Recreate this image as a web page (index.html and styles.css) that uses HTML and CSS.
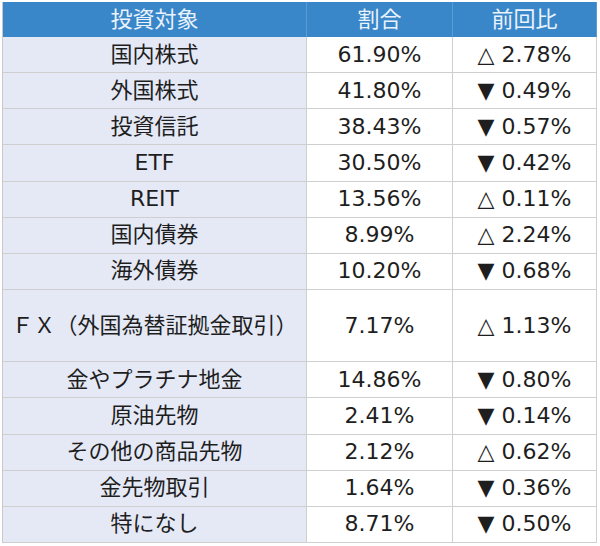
FILE: index.html
```html
<!DOCTYPE html>
<html lang="ja">
<head>
<meta charset="utf-8">
<link rel="stylesheet" href="styles.css">
</head>
<body>
<div class="tbl">
  <div class="c h">投資対象</div><div class="c h">割合</div><div class="c h">前回比</div>
  <div class="c n">国内株式</div><div class="c">61.90%</div><div class="c">△ 2.78%</div>
  <div class="c n">外国株式</div><div class="c">41.80%</div><div class="c">▼ 0.49%</div>
  <div class="c n">投資信託</div><div class="c">38.43%</div><div class="c">▼ 0.57%</div>
  <div class="c n">ETF</div><div class="c">30.50%</div><div class="c">▼ 0.42%</div>
  <div class="c n">REIT</div><div class="c">13.56%</div><div class="c">△ 0.11%</div>
  <div class="c n">国内債券</div><div class="c">8.99%</div><div class="c">△ 2.24%</div>
  <div class="c n">海外債券</div><div class="c">10.20%</div><div class="c">▼ 0.68%</div>
  <div class="c n">ＦＸ（外国為替証拠金取引）</div><div class="c">7.17%</div><div class="c">△ 1.13%</div>
  <div class="c n">金やプラチナ地金</div><div class="c">14.86%</div><div class="c">▼ 0.80%</div>
  <div class="c n">原油先物</div><div class="c">2.41%</div><div class="c">▼ 0.14%</div>
  <div class="c n">その他の商品先物</div><div class="c">2.12%</div><div class="c">△ 0.62%</div>
  <div class="c n">金先物取引</div><div class="c">1.64%</div><div class="c">▼ 0.36%</div>
  <div class="c n">特になし</div><div class="c">8.71%</div><div class="c">▼ 0.50%</div>
</div>
</body>
</html>
```
FILE: styles.css
```css
html, body {
  margin: 0;
  padding: 0;
  background: #ffffff;
}
body {
  padding: 2px 0 0 2px;
  font-family: "DejaVu Sans", "Noto Sans CJK JP", sans-serif;
  font-size: 22px;
  color: #1e1e1e;
}
.tbl {
  width: 594px;
  height: 541px;
  display: grid;
  grid-template-columns: 304px 146px 144px;
  grid-template-rows: 35px repeat(7, 1fr) 2fr repeat(5, 1fr);
  border-left: 1px solid #c9c9c9;
  box-sizing: border-box;
}
.c {
  display: flex;
  align-items: center;
  justify-content: center;
  border-right: 1px solid #cfcfcf;
  border-bottom: 1px solid #cfcfcf;
  background: #ffffff;
  white-space: nowrap;
  line-height: 1;
}
.h {
  background: #3987c9;
  color: #eaf2fb;
  border-right: 1px solid #5b9bd3;
  border-bottom: none;
}
.n {
  background: #e5e9f6;
}
```
